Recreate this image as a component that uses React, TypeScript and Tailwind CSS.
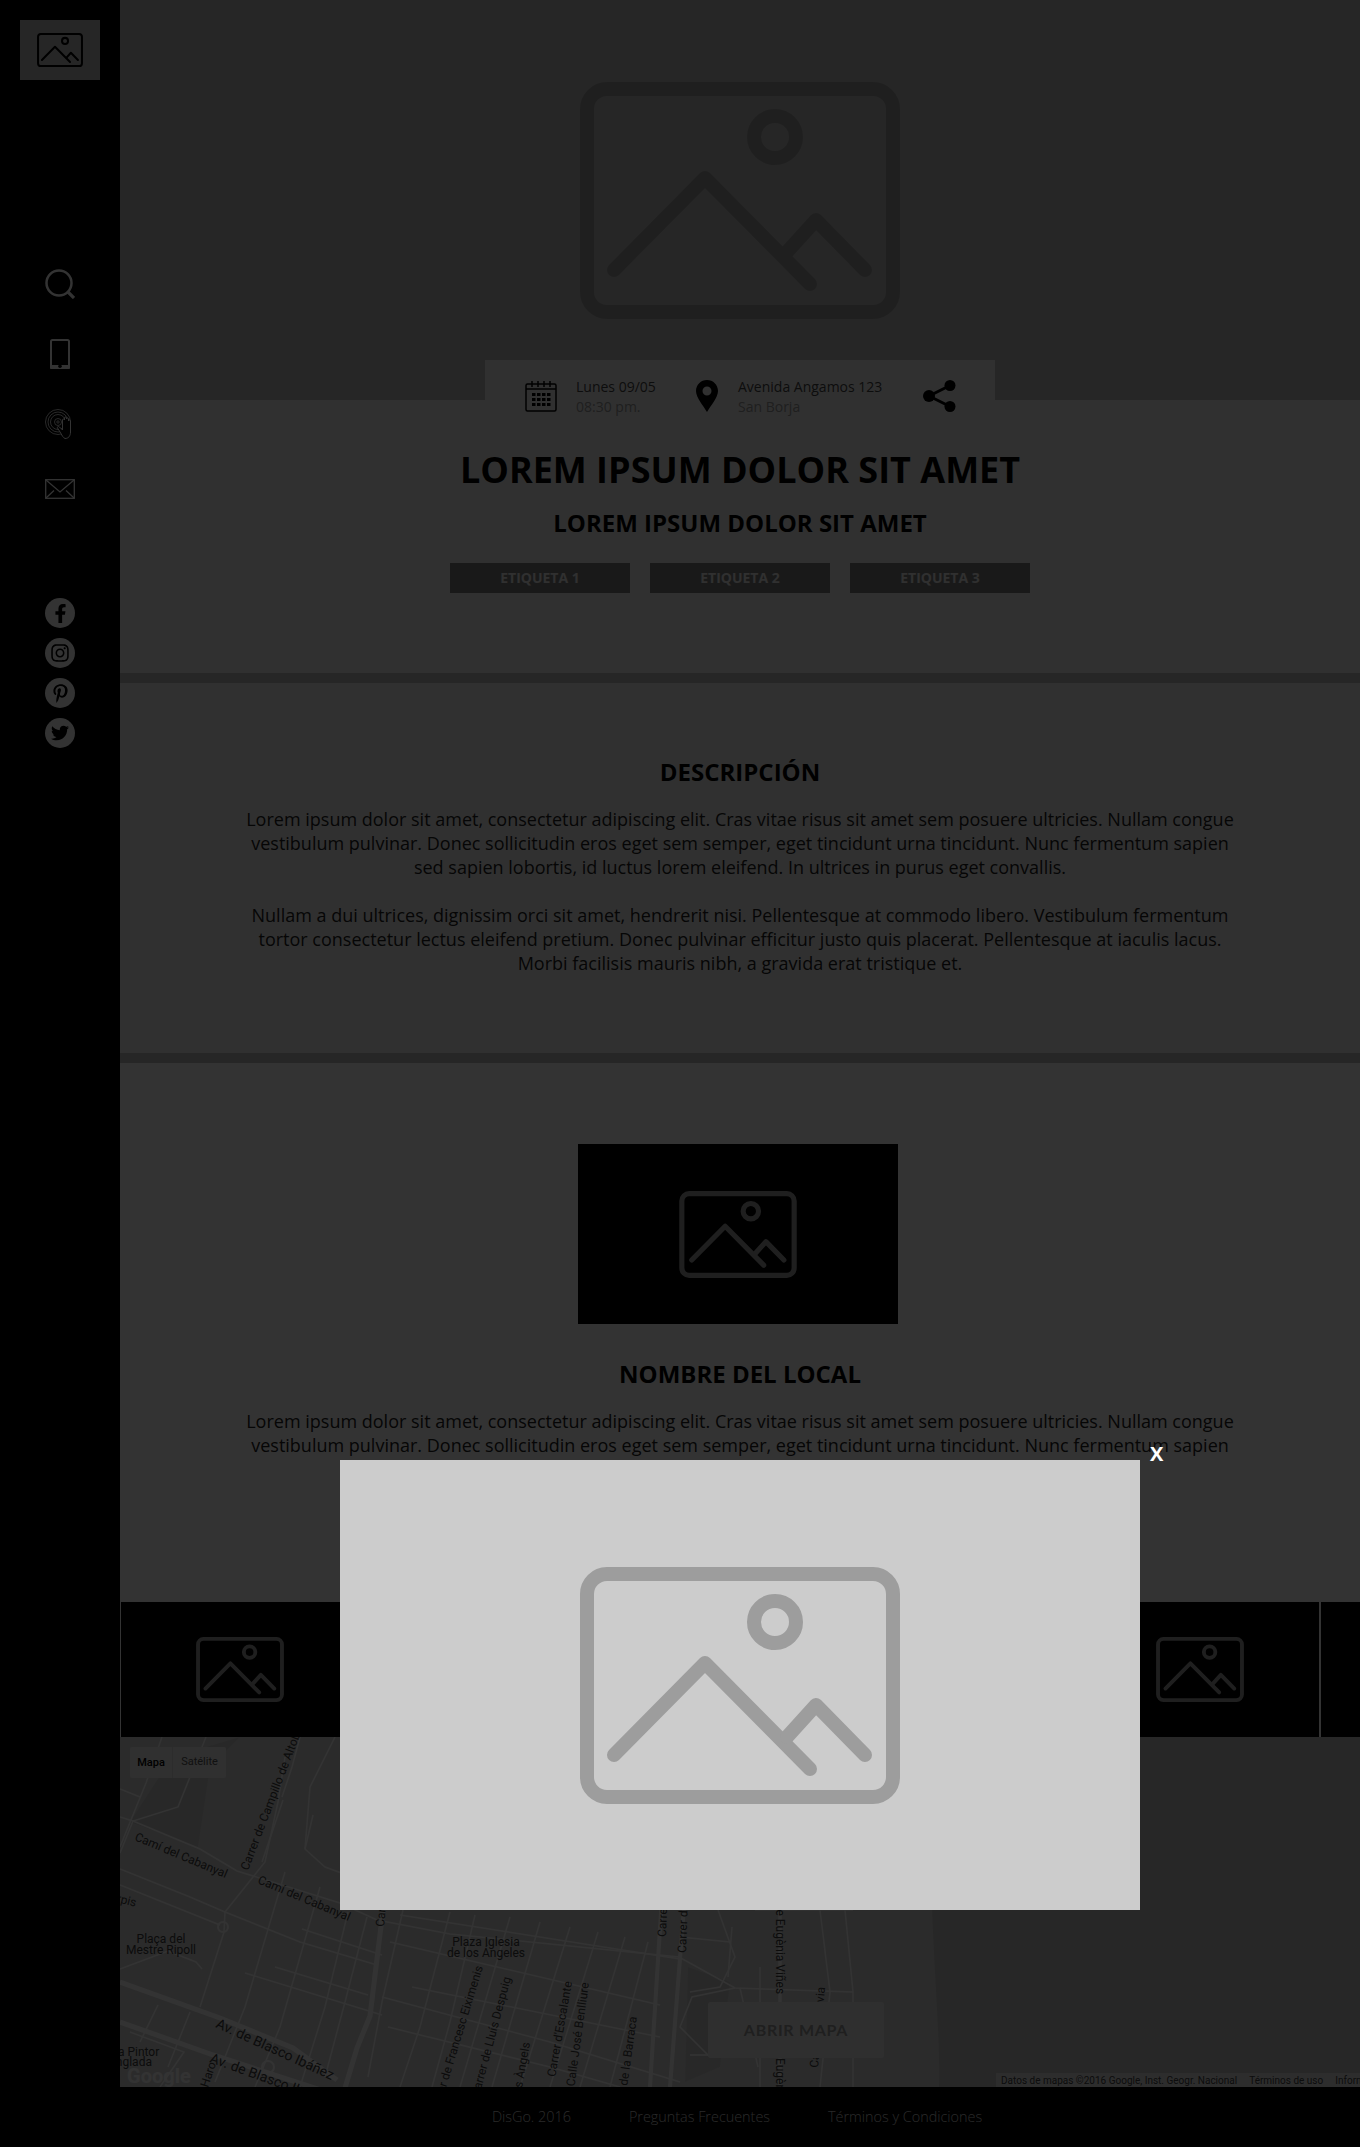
import { FaFacebookF, FaInstagram, FaPinterestP, FaTwitter } from "react-icons/fa";

const bodyText = (
  <>
    Lorem ipsum dolor sit amet, consectetur adipiscing elit. Cras vitae risus sit amet sem posuere ultricies. Nullam congue
    <br />
    vestibulum pulvinar. Donec sollicitudin eros eget sem semper, eget tincidunt urna tincidunt. Nunc fermentum sapien
    <br />
    sed sapien lobortis, id luctus lorem eleifend. In ultrices in purus eget convallis.
  </>
);

function PictureIcon({ className }: { className: string }) {
  return (
    <svg viewBox="0 0 320 237" className={className} fill="none" stroke="currentColor" strokeWidth="14" strokeLinecap="round" strokeLinejoin="round">
      <rect x="7" y="7" width="306" height="223" rx="20" />
      <circle cx="195" cy="55" r="21" />
      <path d="M34 188L125 96L230 202" />
      <path d="M207 170L236 138L285 188" />
    </svg>
  );
}

function SearchIcon() {
  return (
    <svg viewBox="0 0 30 30" className="w-[30px] h-[30px]" fill="none" stroke="currentColor" strokeWidth="2.500">
      <circle cx="14" cy="14" r="12.500" />
      <path d="M22.500 22.500L29 29" strokeWidth="3.200" />
    </svg>
  );
}

function PhoneIcon() {
  return (
    <svg viewBox="0 0 20 30" className="w-5 h-[30px]" fill="none" stroke="currentColor" strokeWidth="2">
      <rect x="1" y="1" width="18" height="28" rx="1.500" />
      <path d="M0 26h20v3a1 1 0 0 1-1 1H1a1 1 0 0 1-1-1z" fill="currentColor" stroke="none" />
      <circle cx="10" cy="27.200" r="1.800" fill="#000" stroke="none" />
    </svg>
  );
}

function DjIcon() {
  return (
    <svg viewBox="0 0 30 30" className="w-[30px] h-[30px]" fill="none" stroke="currentColor" strokeWidth="0.800">
      <circle cx="13" cy="13" r="12.500" />
      <circle cx="13" cy="13" r="10" />
      <circle cx="13" cy="13" r="7.500" />
      <circle cx="13" cy="13" r="3.500" />
      <circle cx="13" cy="13" r="1.200" />
      <path
        d="M20 29.500c-2-1-3-3-4-5l-3.500-5.500c-.7-1.200 1-2.200 2-1l3 3V11c0-1.400 2-1.400 2 0V9c0-1.400 2-1.400 2 0v1c0-1.400 2-1.400 2 0v2c0-1.400 2-1.400 2 0v11c0 4-2 6.500-5.500 6.500z"
        fill="#000"
        strokeWidth="1"
      />
    </svg>
  );
}

function MailIcon() {
  return (
    <svg viewBox="0 0 30 20" className="w-[30px] h-5" fill="none" stroke="currentColor" strokeWidth="1.300">
      <rect x="0.700" y="0.700" width="28.600" height="18.600" />
      <path d="M0.700 0.700L15 13L29.300 0.700" />
      <path d="M0.700 19.300L9 11.500M29.300 19.300L21 11.500" />
    </svg>
  );
}

function CalendarIcon() {
  return (
    <svg viewBox="0 0 32 32" className="w-8 h-8 shrink-0 text-black" fill="none" stroke="currentColor" strokeWidth="1.500">
      <rect x="1" y="4" width="30" height="27" rx="1.500" />
      <path d="M1 9h30M7 1v6M13 1v6M19 1v6M25 1v6" />
      <g fill="currentColor" stroke="none">
        <rect x="7" y="13" width="3.500" height="3" />
        <rect x="12" y="13" width="3.500" height="3" />
        <rect x="17" y="13" width="3.500" height="3" />
        <rect x="22" y="13" width="3.500" height="3" />
        <rect x="7" y="18" width="3.500" height="3" />
        <rect x="12" y="18" width="3.500" height="3" />
        <rect x="17" y="18" width="3.500" height="3" />
        <rect x="22" y="18" width="3.500" height="3" />
        <rect x="7" y="23" width="3.500" height="3" />
        <rect x="12" y="23" width="3.500" height="3" />
        <rect x="17" y="23" width="3.500" height="3" />
        <rect x="22" y="23" width="3.500" height="3" />
      </g>
    </svg>
  );
}

function PinIcon() {
  return (
    <svg viewBox="0 0 22 32" className="w-[22px] h-8 shrink-0 text-black" fill="currentColor">
      <path fillRule="evenodd" d="M11 0C4.900 0 0 4.900 0 11c0 6.500 7.500 15 11 21c3.500-6 11-14.500 11-21C22 4.900 17.100 0 11 0zm0 6.500a4.500 4.500 0 1 1 0 9a4.500 4.500 0 0 1 0-9z" />
    </svg>
  );
}

function ShareIcon() {
  return (
    <svg viewBox="0 0 33 32" className="w-[33px] h-8 shrink-0 text-black" fill="currentColor">
      <circle cx="6" cy="16" r="6" />
      <circle cx="27" cy="5.500" r="5.500" />
      <circle cx="27" cy="26.500" r="5.500" />
      <path d="M6 16L27 5.500M6 16L27 26.500" stroke="currentColor" strokeWidth="3" />
    </svg>
  );
}

const thinRoads = [
  "M0 80L13 84L80 112L117 134L220 166L257 183L330 197L559 220L615 251L733 255",
  "M0 52L20 60M0 132L70 160L105 175L180 205L257 228",
  "M0 148L60 172L100 188",
  "M0 232L48 214L76 225L82 232",
  "M86 0L58 70L13 84L0 116",
  "M165 20L158 65L145 125L105 175L104 195L80 270",
  "M180 0L172 30L162 60M163 63L142 125",
  "M193 78L185 112L205 130L260 150",
  "M215 0L190 50L185 112",
  "M165 135L125 270L95 345",
  "M200 150L160 290L135 350",
  "M228 175L205 270L180 350",
  "M247 180L225 265L205 340",
  "M125 236L262 278M155 230L248 258M182 192L262 218",
  "M262 260L430 305L560 345",
  "M270 205L540 268",
  "M268 290L430 330L500 350",
  "M283 173L262 265L248 340",
  "M330 175L300 290L280 350",
  "M355 178L330 285L312 350",
  "M390 180L340 350",
  "M420 185L372 350",
  "M450 190L400 350",
  "M478 195L430 350",
  "M505 200L460 350",
  "M528 205L490 350",
  "M280 178L560 222",
  "M292 250L540 300",
  "M42 0L26 46L0 110",
  "M10 295L64 315L40 350",
  "M70 275L48 330",
  "M38 268L20 305",
  "M598 173L615 220L600 250L570 255",
  "M612 190L608 240M620 251L638 330M640 230L640 350",
  "M615 251L572 260L560 290L590 320",
  "M725 173L733 255L733 350",
  "M700 173L710 255L700 350",
  "M635 173H733",
  "M570 318H735",
  "M560 200L610 205",
];

function MapDrawing() {
  return (
    <svg viewBox="0 0 1240 350" className="w-full h-full" fill="none">
      <rect width="1240" height="350" fill="#d7d7d7" />
      <path d="M812 173C815 250 820 300 819 350H1240V0H812z" fill="#c4c4c4" />
      <path d="M52 20L120 0L90 30L78 110L10 85z" fill="#c9c9c9" />
      <path d="M568 230L610 245L600 330L565 345z" fill="#c9c9c9" />
      <g stroke="#fff" strokeWidth="1.500">
        {thinRoads.map((d) => (
          <path key={d} d={d} />
        ))}
      </g>
      <g stroke="#fff" strokeWidth="5">
        <path d="M0 245L100 281L173 311L217 343" />
        <path d="M0 285L93 318L213 357" />
        <path d="M263 173L250 279L237 311L225 351" />
        <path d="M542 160L530 350" strokeWidth="4" />
        <path d="M564 170L550 350" strokeWidth="4" />
        <path d="M660 170V350" strokeWidth="3.500" />
      </g>
      <circle cx="148" cy="330" r="6" stroke="#fff" strokeWidth="2" />
      <circle cx="103" cy="190" r="5" stroke="#fff" strokeWidth="2" />
      <g fill="#3c3c3c" fontSize="12" fontFamily="Roboto, sans-serif">
        <text transform="translate(14 103) rotate(22.700)">Camí del Cabanyal</text>
        <text transform="translate(137 146) rotate(22.700)">Camí del Cabanyal</text>
        <text transform="translate(128 134) rotate(-69)">Carrer de Campillo de Altobuey</text>
        <text transform="translate(-4 165) rotate(14)">rpis</text>
        <text x="41" y="206" textAnchor="middle">Plaça del</text>
        <text x="41" y="217" textAnchor="middle">Mestre Ripoll</text>
        <text fontSize="14" transform="translate(95 290) rotate(24.500)">Av. de Blasco Ibáñez</text>
        <text fontSize="14" transform="translate(89 325) rotate(20)">Av. de Blasco Ibáñez</text>
        <text x="-5" y="319">la Pintor</text>
        <text x="-12" y="329">Anglada</text>
        <text transform="translate(88 351) rotate(-72)">Haro</text>
        <text transform="translate(264 190) rotate(-85)">Carrer</text>
        <text x="366" y="209" textAnchor="middle">Plaza Iglesia</text>
        <text x="366" y="220" textAnchor="middle">de los Ángeles</text>
        <text transform="translate(363 230) rotate(-73)" textAnchor="end">Carrer de Francesc Eiximenis</text>
        <text transform="translate(391 241) rotate(-75)" textAnchor="end">Carrer de Lluís Despuig</text>
        <text transform="translate(410 306) rotate(-80)" textAnchor="end">Carrer dels Àngels</text>
        <text transform="translate(452 245) rotate(-80)" textAnchor="end">Carrer d'Escalante</text>
        <text transform="translate(469 246) rotate(-82)" textAnchor="end">Calle José Benlliure</text>
        <text transform="translate(517 280) rotate(-82)" textAnchor="end">Carrer de la Barraca</text>
        <text transform="translate(546 200) rotate(-88)">Carrer</text>
        <text transform="translate(566 216) rotate(-88)">Carrer de</text>
        <text transform="translate(656 130) rotate(90)">Carrer de Eugènia Viñes</text>
        <text transform="translate(656 321) rotate(90)">Eugènia</text>
        <text transform="translate(698 331) rotate(-85)">Carrer de Xàvia</text>
      </g>
      <text x="7" y="346" fill="#fff" fontSize="20" fontWeight="700" fontFamily="Roboto, sans-serif">Google</text>
    </svg>
  );
}

export default function App() {
  return (
    <div className="relative w-[1360px] h-[2147px] overflow-hidden bg-white font-['Open_Sans',sans-serif] text-[#222]">
      <div className="flex h-full">
        {/* Sidebar */}
        <aside className="w-[120px] shrink-0 bg-black text-white flex flex-col items-center">
          <div className="mt-5 w-20 h-[60px] bg-[#bfbfbf] text-black flex items-center justify-center">
            <PictureIcon className="w-[46px] h-[34px]" />
          </div>
          <div className="mt-[189px] flex flex-col items-center gap-10">
            <SearchIcon />
            <PhoneIcon />
            <DjIcon />
            <MailIcon />
          </div>
          <div className="mt-[99px] flex flex-col gap-2.5">
            <div className="w-[30px] h-[30px] rounded-full bg-white text-black flex items-center justify-center text-[19px]"><FaFacebookF /></div>
            <div className="w-[30px] h-[30px] rounded-full bg-white text-black flex items-center justify-center text-[20px]"><FaInstagram /></div>
            <div className="w-[30px] h-[30px] rounded-full bg-white text-black flex items-center justify-center text-[19px]"><FaPinterestP /></div>
            <div className="w-[30px] h-[30px] rounded-full bg-white text-black flex items-center justify-center text-[18px]"><FaTwitter /></div>
          </div>
        </aside>

        <main className="w-[1240px] flex flex-col">
          {/* Hero */}
          <div className="h-[400px] bg-[#bfbfbf] text-[#9d9d9d] flex items-center justify-center shrink-0">
            <PictureIcon className="w-[320px] h-[237px]" />
          </div>

          {/* Event header */}
          <section className="bg-[#f0f0f0] text-center pb-20 border-b-[10px] border-[#bfbfbf]">
            <div className="-mt-10 mx-auto w-[510px] h-20 bg-[#f0f0f0] pl-10 pt-5 flex items-start text-left text-[14px] leading-5 text-[#444] relative">
              <CalendarIcon />
              <div className="ml-[19px] w-[120px] -mt-[3px]">
                <div>Lunes 09/05</div>
                <div className="text-[#999]">08:30 pm.</div>
              </div>
              <PinIcon />
              <div className="ml-5 w-[185px] -mt-[3px]">
                <div>Avenida Angamos 123</div>
                <div className="text-[#999]">San Borja</div>
              </div>
              <ShareIcon />
            </div>
            <h1 className="mt-[5px] text-[36px] leading-[50px] font-bold text-black">LOREM IPSUM DOLOR SIT AMET</h1>
            <h2 className="mt-[10px] text-[24px] leading-9 font-bold text-black">LOREM IPSUM DOLOR SIT AMET</h2>
            <div className="mt-[22px] flex justify-center gap-5">
              <div className="w-[180px] h-[30px] bg-[#7d7d7d] text-[#eee] text-[14px] font-bold leading-[30px]">ETIQUETA 1</div>
              <div className="w-[180px] h-[30px] bg-[#7d7d7d] text-[#eee] text-[14px] font-bold leading-[30px]">ETIQUETA 2</div>
              <div className="w-[180px] h-[30px] bg-[#7d7d7d] text-[#eee] text-[14px] font-bold leading-[30px]">ETIQUETA 3</div>
            </div>
          </section>

          {/* Descripcion */}
          <section className="bg-[#f0f0f0] text-center pt-[71px] pb-[78px] border-b-[10px] border-[#bfbfbf]">
            <h3 className="text-[24px] leading-9 font-bold text-black">DESCRIPCIÓN</h3>
            <p className="mt-[17px] text-[18px] leading-6">{bodyText}</p>
            <p className="mt-6 text-[18px] leading-6">
              Nullam a dui ultrices, dignissim orci sit amet, hendrerit nisi. Pellentesque at commodo libero. Vestibulum fermentum
              <br />
              tortor consectetur lectus eleifend pretium. Donec pulvinar efficitur justo quis placerat. Pellentesque at iaculis lacus.
              <br />
              Morbi facilisis mauris nibh, a gravida erat tristique et.
            </p>
          </section>

          {/* Local */}
          <section className="bg-white text-center pt-[81px] pb-[121px]">
            <div className="flex justify-center pr-1">
              <div className="w-80 h-[180px] bg-black text-[#9d9d9d] flex items-center justify-center">
                <PictureIcon className="w-[118px] h-[87px]" />
              </div>
            </div>
            <h3 className="mt-8 text-[24px] leading-9 font-bold text-black">NOMBRE DEL LOCAL</h3>
            <p className="mt-[17px] text-[18px] leading-6">{bodyText}</p>
          </section>

          {/* Gallery strip */}
          <div className="flex h-[135px] overflow-hidden shrink-0">
            {[0, 1, 2, 3, 4, 5].map((n) => (
              <div key={n} className="w-[240px] shrink-0 bg-black border-x border-white text-[#9d9d9d] flex items-center justify-center">
                <PictureIcon className="w-[88px] h-[65px]" />
              </div>
            ))}
          </div>

          {/* Map */}
          <div className="relative h-[350px] shrink-0 overflow-hidden">
            <MapDrawing />
            <div className="absolute left-[10px] top-[10px] w-24 h-[31px] bg-[#eee] rounded-[2px] flex items-center font-['Roboto',sans-serif] text-[11px]">
              <div className="w-[43px] text-center font-medium text-black border-r border-[#ddd] leading-[31px]">Mapa</div>
              <div className="flex-1 text-center text-[#555]">Satélite</div>
            </div>
            <div className="absolute left-[588px] top-[265px] w-[176px] h-14 bg-[#ececec] rounded-[3px] flex items-center justify-center font-['Lato',sans-serif] font-bold text-[16px] tracking-[0.7px] text-[#999]">
              ABRIR MAPA
            </div>
            <div className="absolute right-0 bottom-0 w-[364px] h-3.5 bg-[#dedede] flex items-center gap-3 pl-[5px] whitespace-nowrap font-['Roboto',sans-serif] text-[10px] text-[#444]">
              <span>Datos de mapas ©2016 Google, Inst. Geogr. Nacional</span>
              <span>Términos de uso</span>
              <span>Informar de un error</span>
            </div>
          </div>

          {/* Footer */}
          <footer className="h-[60px] shrink-0 bg-black flex items-center justify-center gap-[58px] pr-[6px] text-[14.4px] font-light text-[#ccc]">
            <span>DisGo. 2016</span>
            <span>Preguntas Frecuentes</span>
            <span>Términos y Condiciones</span>
          </footer>
        </main>
      </div>

      {/* Modal overlay */}
      <div className="absolute inset-0 bg-black/80" />
      <div className="absolute left-[340px] top-[1460px] w-[800px] h-[450px] bg-[#ccc] text-[#9d9d9d] flex items-center justify-center">
        <PictureIcon className="w-[320px] h-[237px]" />
      </div>
      <div className="absolute left-[1150px] top-[1440px] text-white font-bold text-[20px] leading-7">X</div>
    </div>
  );
}
